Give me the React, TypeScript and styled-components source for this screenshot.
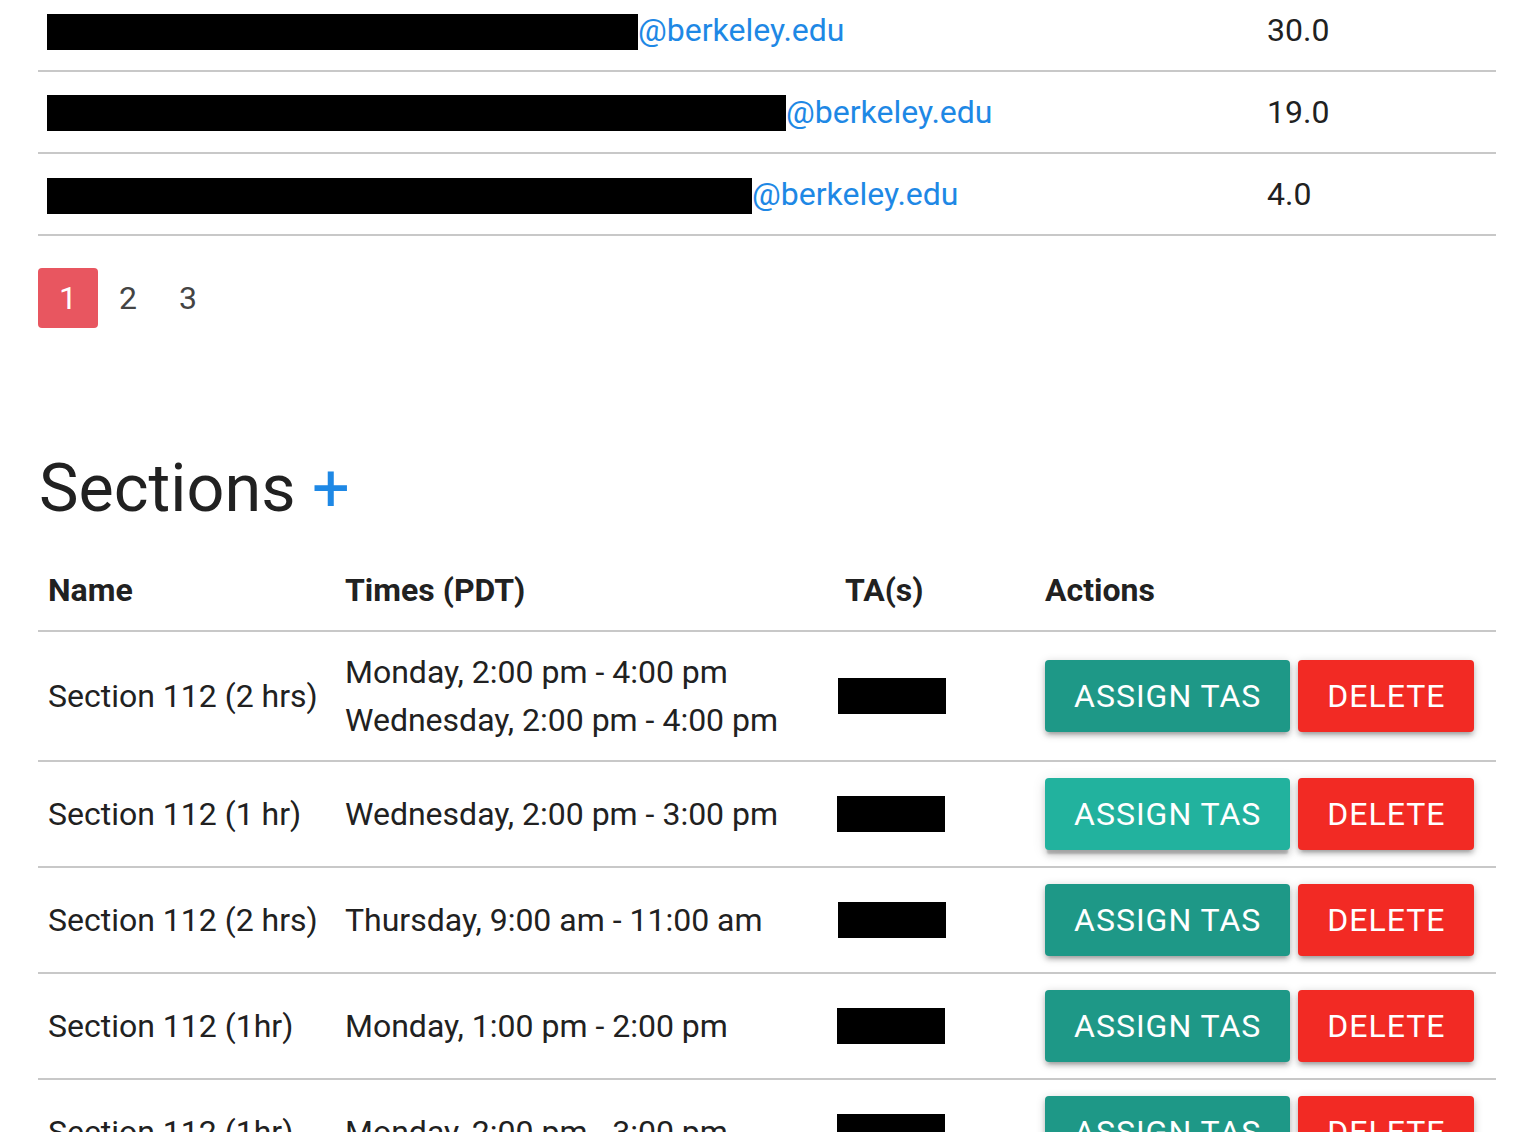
import React from "react";
import styled, { createGlobalStyle } from "styled-components";

const Global = createGlobalStyle`
  html, body { margin: 0; padding: 0; background: #fff; overflow: hidden; }
  body { font-family: Roboto, "Liberation Sans", sans-serif; color: #212121; }
`;

const Page = styled.div`
  margin-top: -10px;
  padding: 0 34px 0 38px;
`;

const Table = styled.table`
  width: 100%;
  border-collapse: collapse;
  table-layout: fixed;
`;

const Row = styled.tr`
  border-bottom: 2px solid #c8c8c8;
`;

const Cell = styled.td`
  padding: 16px 10px;
  font-size: 32px;
  line-height: 48px;
  vertical-align: middle;
  white-space: nowrap;
  text-align: left;
`;

const HeadCell = styled.th`
  padding: 16px 10px;
  font-size: 32px;
  line-height: 48px;
  font-weight: 700;
  text-align: left;
  vertical-align: middle;
`;

const Inline = styled.div`
  display: flex;
  align-items: center;
  height: 48px;
`;

const Redacted = styled.span<{ $w: number; $shift?: number; $drop?: number }>`
  display: block;
  flex: none;
  width: ${(p) => p.$w}px;
  height: 36px;
  background: #000;
  margin-left: ${(p) => p.$shift ?? -1}px;
  margin-top: ${(p) => p.$drop ?? 0}px;
`;

const EmailLink = styled.a`
  color: #1e88e5;
  text-decoration: none;
`;

const Pager = styled.ul`
  display: flex;
  list-style: none;
  margin: 32px 0 0;
  padding: 0;
`;

const PageItem = styled.li<{ $active?: boolean }>`
  width: 60px;
  height: 60px;
  line-height: 60px;
  text-align: center;
  font-size: 32px;
  border-radius: 4px;
  color: ${(p) => (p.$active ? "#fff" : "#444")};
  background: ${(p) => (p.$active ? "#e85660" : "transparent")};
`;

const Heading = styled.h4`
  margin: 123px 0 24px 1px;
  font-size: 66.5px;
  line-height: 75px;
  font-weight: 400;
  color: #212121;
`;

const Plus = styled.span`
  color: #1e88e5;
`;

const Times = styled.div`
  line-height: 48px;
`;

const Actions = styled.div`
  display: flex;
  gap: 8px;
`;

const Button = styled.button<{ $kind: "assign" | "delete"; $hover?: boolean }>`
  height: 72px;
  padding: 0 29px;
  border: none;
  border-radius: 4px;
  font-family: Roboto, "Liberation Sans", sans-serif;
  font-size: 32px;
  letter-spacing: 1px;
  text-transform: uppercase;
  color: #fff;
  cursor: pointer;
  background: ${(p) =>
    p.$kind === "delete" ? "#f22a24" : p.$hover ? "#22b29e" : "#1e9887"};
  box-shadow: ${(p) =>
    p.$hover
      ? "0 6px 6px 0 rgba(0,0,0,0.14), 0 2px 14px 0 rgba(0,0,0,0.12), 0 6px 2px -2px rgba(0,0,0,0.2)"
      : "0 4px 4px 0 rgba(0,0,0,0.14), 0 6px 2px -4px rgba(0,0,0,0.12), 0 2px 10px 0 rgba(0,0,0,0.2)"};
`;

const students = [
  { w: 591, hours: "30.0", drop: 4 },
  { w: 739, hours: "19.0", drop: 1 },
  { w: 705, hours: "4.0", drop: 4 },
];

const sections = [
  { name: "Section 112 (2 hrs)", times: ["Monday, 2:00 pm - 4:00 pm", "Wednesday, 2:00 pm - 4:00 pm"], ta: -7 },
  { name: "Section 112 (1 hr)", times: ["Wednesday, 2:00 pm - 3:00 pm"], ta: -8, hover: true },
  { name: "Section 112 (2 hrs)", times: ["Thursday, 9:00 am - 11:00 am"], ta: -7 },
  { name: "Section 112 (1hr)", times: ["Monday, 1:00 pm - 2:00 pm"], ta: -8 },
  { name: "Section 112 (1hr)", times: ["Monday, 2:00 pm - 3:00 pm"], ta: -8 },
];

export default function App() {
  return (
    <>
      <Global />
      <Page>
        <Table>
          <colgroup>
            <col style={{ width: 1219 }} />
            <col />
          </colgroup>
          <tbody>
            {students.map((s, i) => (
              <Row key={i}>
                <Cell>
                  <Inline>
                    <Redacted $w={s.w} $drop={s.drop} />
                    <EmailLink href="#">@berkeley.edu</EmailLink>
                  </Inline>
                </Cell>
                <Cell>{s.hours}</Cell>
              </Row>
            ))}
          </tbody>
        </Table>

        <Pager>
          <PageItem $active>1</PageItem>
          <PageItem>2</PageItem>
          <PageItem>3</PageItem>
        </Pager>

        <Heading>
          Sections <Plus>+</Plus>
        </Heading>

        <Table>
          <colgroup>
            <col style={{ width: 297 }} />
            <col style={{ width: 500 }} />
            <col style={{ width: 200 }} />
            <col />
          </colgroup>
          <thead>
            <Row>
              <HeadCell>Name</HeadCell>
              <HeadCell>Times (PDT)</HeadCell>
              <HeadCell>TA(s)</HeadCell>
              <HeadCell>Actions</HeadCell>
            </Row>
          </thead>
          <tbody>
            {sections.map((s, i) => (
              <Row key={i}>
                <Cell>{s.name}</Cell>
                <Cell>
                  {s.times.map((t) => (
                    <Times key={t}>{t}</Times>
                  ))}
                </Cell>
                <Cell>
                  <Inline>
                    <Redacted $w={108} $shift={s.ta} />
                  </Inline>
                </Cell>
                <Cell>
                  <Actions>
                    <Button $kind="assign" $hover={s.hover}>Assign TAs</Button>
                    <Button $kind="delete">Delete</Button>
                  </Actions>
                </Cell>
              </Row>
            ))}
          </tbody>
        </Table>
      </Page>
    </>
  );
}
